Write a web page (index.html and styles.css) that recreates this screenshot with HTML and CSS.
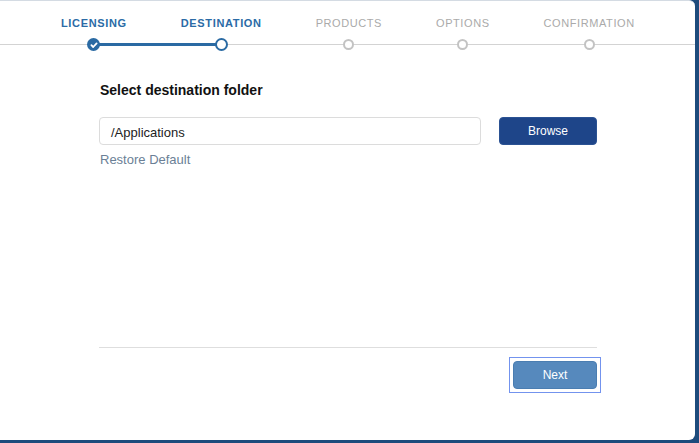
FILE: index.html
```html
<!DOCTYPE html>
<html>
<head>
<meta charset="utf-8">
<link rel="stylesheet" href="styles.css">
</head>
<body>
<div class="panel">
  <div class="stepper">
    <div class="progress" style="left:93px;width:127px"></div>
    <div class="step done">
      <span class="label">LICENSING</span>
      <span class="dot"><svg viewBox="0 0 12 12" width="12" height="12"><path d="M3.4 6.2 L5.2 8 L8.6 4.4" fill="none" stroke="#fff" stroke-width="1.8" stroke-linecap="round" stroke-linejoin="round"/></svg></span>
    </div>
    <div class="step current">
      <span class="label">DESTINATION</span>
      <span class="dot"></span>
    </div>
    <div class="step">
      <span class="label">PRODUCTS</span>
      <span class="dot"></span>
    </div>
    <div class="step">
      <span class="label">OPTIONS</span>
      <span class="dot"></span>
    </div>
    <div class="step">
      <span class="label">CONFIRMATION</span>
      <span class="dot"></span>
    </div>
  </div>
  <div class="content">
    <h1 class="title">Select destination folder</h1>
    <div class="row">
      <div class="field">/Applications</div>
      <button class="btn browse">Browse</button>
    </div>
    <a class="restore">Restore Default</a>
  </div>
  <div class="footer">
    <div class="focus-ring">
      <button class="btn next">Next</button>
    </div>
  </div>
</div>
</body>
</html>
```
FILE: styles.css
```css
html, body {
  margin: 0;
  padding: 0;
}
body {
  background: #1d4b7c;
  width: 699px;
  height: 443px;
  font-family: "Liberation Sans", Arial, sans-serif;
  overflow: hidden;
}
.panel {
  box-sizing: border-box;
  width: 695px;
  height: 440px;
  background: #fff;
  border-top: 1px solid #d4dbe3;
  border-radius: 0 6px 6px 0;
  display: flex;
  flex-direction: column;
}
.stepper {
  position: relative;
  display: flex;
  gap: 54px;
  padding: 16px 0 0 61px;
  height: 34px;
}
.stepper::before {
  content: "";
  position: absolute;
  left: 0;
  right: 0;
  top: 43px;
  height: 1px;
  background: #d3d3d3;
}
.progress {
  position: absolute;
  top: 42px;
  height: 3px;
  background: #2a6aa3;
}
.step {
  position: relative;
  display: flex;
  flex-direction: column;
  align-items: center;
}
.label {
  font-size: 11px;
  line-height: 13px;
  letter-spacing: 0.58px;
  color: #aaaaaa;
  white-space: nowrap;
}
.step.done .label,
.step.current .label {
  color: #2b6ba6;
  font-weight: bold;
  letter-spacing: 0.65px;
}
.dot {
  box-sizing: border-box;
  margin-top: 9px;
  width: 11px;
  height: 11px;
  border-radius: 50%;
  border: 2px solid #c3c3c3;
  background: #fff;
  position: relative;
  z-index: 1;
}
.step.current .dot {
  width: 13px;
  height: 13px;
  margin-top: 8px;
  border: 2.5px solid #2a6aa3;
}
.step.done .dot {
  width: 13px;
  height: 13px;
  margin-top: 8px;
  border: none;
  background: #2a6aa3;
  display: flex;
  align-items: center;
  justify-content: center;
}
.content {
  flex: 1;
  padding: 0 98px 0 99px;
}
.title {
  margin: 31px 0 0 1px;
  font-size: 14px;
  line-height: 16px;
  font-weight: bold;
  color: #111;
}
.row {
  display: flex;
  gap: 18px;
  margin-top: 19px;
}
.field {
  box-sizing: border-box;
  flex: 1;
  height: 28px;
  border: 1px solid #dcdcdc;
  border-radius: 4px;
  padding: 1px 11px 0;
  font-size: 13px;
  line-height: 27px;
  color: #222;
}
.btn {
  box-sizing: border-box;
  border: none;
  border-radius: 4px;
  color: #fff;
  font-family: "Liberation Sans", Arial, sans-serif;
  font-size: 12px;
  padding: 0;
}
.browse {
  width: 98px;
  height: 28px;
  background: #1e4589;
  border: 1px solid #2b5293;
}
.restore {
  display: block;
  margin-top: 7px;
  margin-left: 1px;
  font-size: 13px;
  line-height: 16px;
  color: #6b7f96;
}
.footer {
  margin: 0 98px 0 99px;
  border-top: 1px solid #dedede;
  padding: 9px 0 47px;
  display: flex;
  justify-content: flex-end;
}
.focus-ring {
  display: flex;
  margin-right: -4px;
  padding: 3px;
  border: 1px solid #7393ee;
}
.next {
  width: 84px;
  height: 28px;
  background: #5689bd;
  border: 1px solid #4a7db1;
}
```
